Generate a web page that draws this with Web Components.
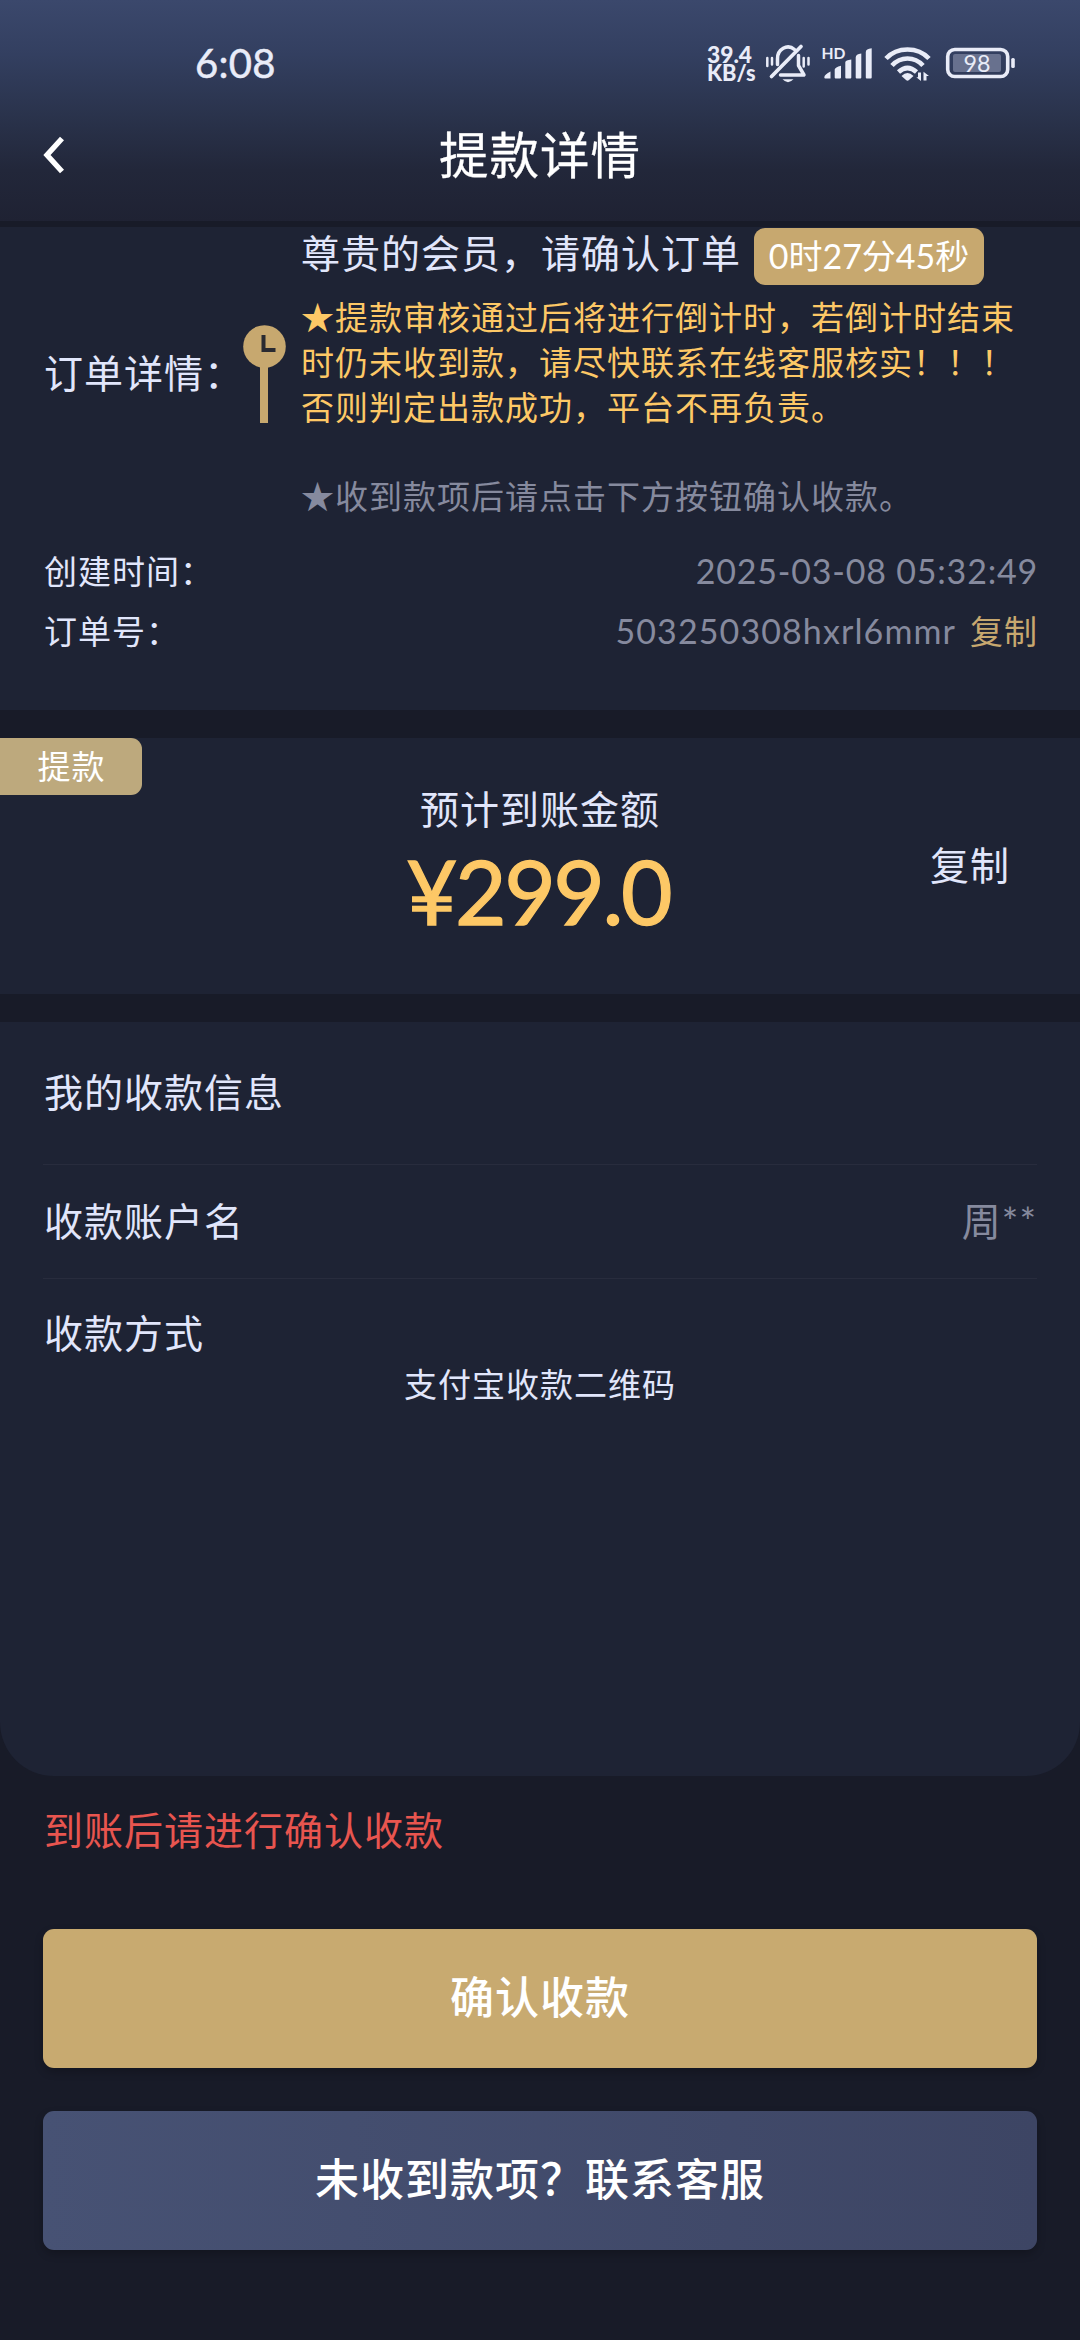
<!DOCTYPE html>
<html lang="zh-CN">
<head>
<meta charset="utf-8">
<title>提款详情</title>
<style>
  html, body { margin: 0; background: #181b28; }
  body {
    width: 1080px; height: 2340px; overflow: hidden;
    font-family: Lato, "Noto Sans CJK SC", sans-serif;
    color: #e1e6fb;
    --panel: #1e2334; --gold: #c7a86f; --amber: #fdc866; --muted: #868a9e;
  }
</style>
</head>
<body>
<withdraw-page></withdraw-page>
<script>
const define = (name, html) => customElements.define(name, class extends HTMLElement {
  constructor() {
    super();
    this.attachShadow({ mode: 'open' }).innerHTML = html;
  }
});

define('status-bar', `
<style>
  :host { display: flex; height: 125px; box-sizing: border-box; padding: 0 65px 0 195px; justify-content: space-between; align-items: center; color: #e9ecf8; }
  .time { font-size: 40px; line-height: 50px; letter-spacing: .3px; font-weight: 400; -webkit-text-stroke: .5px; }
  .icons { display: flex; height: 48px; }
  svg { display: block; }
  text { font-family: Lato, sans-serif; }
</style>
<span class="time">6:08</span>
<div class="icons">
  <svg width="180" height="48" viewBox="0 0 180 48" fill="#e9ecf8">
    <g font-weight="900" font-size="22">
      <text x="7" y="24" textLength="45" lengthAdjust="spacingAndGlyphs">39.4</text>
      <text x="7" y="42" textLength="48.500" lengthAdjust="spacingAndGlyphs">KB/s</text>
    </g>
    <g fill="none" stroke="#e9ecf8" stroke-linecap="round" stroke-linejoin="round">
      <path d="M77.500 25.500V20a10.500 11.500 0 0 1 17-9.500M98.500 16.500v10l5.500 9.500H80.500" stroke-width="3.500"/>
      <path d="M71.500 37.500L101 7.500" stroke-width="3.700"/>
      <path d="M67.300 19v8M72 19v6.500M103.700 19v8.500M108.500 19v6.500" stroke-width="2.500"/>
    </g>
    <path d="M82.500 40.300H93.500Q88 46 82.500 40.300Z"/>
    <text x="121.500" y="20" font-size="15.600" font-weight="700" textLength="24" lengthAdjust="spacingAndGlyphs">HD</text>
    <path d="M124.300 38.200Q124.500 35.500 130.500 32.500V39.500H125.300Q124.300 39.500 124.300 38.200ZM134.700 30.500Q135 28.500 141 26.800V38.500Q141 39.500 140 39.500H135.700Q134.700 39.500 134.700 38.500ZM145.300 23.200Q145.500 21.200 151.300 20.500V38.500Q151.300 39.500 150.300 39.500H146.300Q145.300 39.500 145.300 38.500ZM155.700 18.500Q155.700 15.200 161.300 14.500V38.500Q161.300 39.500 160.300 39.500H156.700Q155.700 39.500 155.700 38.500ZM165.800 13Q165.800 10 171.700 9.300V38.500Q171.700 39.500 170.700 39.500H166.800Q165.800 39.500 165.800 38.500Z"/>
  </svg>
  <svg width="135" height="48" viewBox="0 0 135 48" style="margin-left:-5px" fill="#e9ecf8">
    <g fill="none" stroke="#e9ecf8" stroke-width="4.700">
      <path d="M11 19.500Q19.500 10.500 32.500 10.500T54 19.500"/>
      <path d="M17 26.500Q23.500 19.500 32.500 19.500T48 26.500"/>
      <path d="M23.500 33Q32.500 25 41.500 33"/>
    </g>
    <path d="M26.500 37Q32.500 31 38.500 37L34 41Q32.500 42.300 31 41Z"/>
    <path d="M43 33.500H46V42L41.300 38.300H43ZM48.500 41.500V32.800L54 37H51.500V41.500Z"/>
    <rect x="72.700" y="10.500" width="60" height="27" rx="7" fill="none" stroke="#e9ecf8" stroke-width="3.600"/>
    <rect x="78" y="15" width="48" height="18" rx="2" fill="#68718e"/>
    <text x="102" y="32.800" font-size="24" text-anchor="middle" textLength="27" lengthAdjust="spacingAndGlyphs">98</text>
  </svg>
  <svg width="5" height="48" viewBox="0 0 5 48"><rect x="1.200" y="19" width="3.600" height="10" rx="1.500" fill="#e9ecf8"/></svg>
</div>`);

define('nav-bar', `
<style>
  :host { display: grid; grid-template-columns: 120px 1fr 120px; align-items: center; height: 60px; color: #fff; }
  svg { margin-left: 42px; display: block; }
  h1 { margin: 0; font-size: 49.500px; letter-spacing: 1px; line-height: 60px; font-weight: 400; text-align: center; -webkit-text-stroke: .3px; }
</style>
<svg width="24" height="40" viewBox="0 0 24 40"><path d="M20 3.500L5 20L20 36.500" fill="none" stroke="#fff" stroke-width="5.400"/></svg>
<h1><slot></slot></h1>`);

define('page-header', `
<style>
  :host { display: block; height: 221px; background: linear-gradient(#3b486c 0, #333f60 55px, #2a334c 115px, #22273a 170px, #1f2233 221px); }
</style>
<status-bar></status-bar><nav-bar><slot></slot></nav-bar>`);

define('clock-pin', `
<style>:host { display: block; width: 43px; height: 98px; } svg { display: block; }</style>
<svg width="43" height="98" viewBox="0 0 43 98">
  <rect x="17" y="40" width="8" height="58" fill="#c7a86f"/>
  <circle cx="21.500" cy="21.500" r="21.300" fill="#c7a86f"/>
  <path d="M20.500 10V25H32.500" fill="none" stroke="#292a31" stroke-width="4"/>
</svg>`);

define('gold-badge', `
<style>
  :host { display: block; box-sizing: border-box; height: 57px; line-height: 56px; border-radius: 11px; background: var(--gold); color: #fff; font-size: 34px; text-align: center; white-space: nowrap; }
</style><slot></slot>`);

define('meta-row', `
<style>
  :host { display: flex; justify-content: space-between; height: 60px; line-height: 60px; font-size: 33px; letter-spacing: 1px; white-space: nowrap; }
  .value { display: flex; gap: 14px; color: var(--muted); margin-right: -1px; }
  ::slotted(b) { font-weight: 400; color: var(--gold); }
</style>
<span><slot name="label"></slot></span><div class="value"><slot></slot></div>`);

define('order-card', `
<style>
  :host { display: block; box-sizing: border-box; height: 483px; padding: 1px 43px 0 44px; background: var(--panel); }
  .detail { display: flex; align-items: center; height: 292px; white-space: nowrap; }
  .label { width: 199px; font-size: 39px; letter-spacing: 1px; line-height: 50px; padding-bottom: 3px; }
  .body { margin-left: 15px; height: 292px; }
  .title { display: flex; height: 57px; }
  .title span { font-size: 39px; letter-spacing: 1px; line-height: 51px; width: 453px; }
  gold-badge { width: 230px; }
  p { margin: 0; font-size: 33px; letter-spacing: 1px; line-height: 45px; color: var(--amber); }
  .warn { margin-top: 10px; }
  .tip { margin-top: 44px; color: var(--muted); }
  .meta { margin-top: 21px; }
  .date { font-size: 34px; letter-spacing: .8px; }
  .num { font-size: 34px; letter-spacing: 1.100px; }
</style>
<div class="detail">
  <div class="label">订单详情：</div>
  <clock-pin></clock-pin>
  <div class="body">
    <div class="title"><span>尊贵的会员，请确认订单</span><gold-badge>0时27分45秒</gold-badge></div>
    <p class="warn">★提款审核通过后将进行倒计时，若倒计时结束<br>时仍未收到款，请尽快联系在线客服核实！！！<br>否则判定出款成功，平台不再负责。</p>
    <p class="tip">★收到款项后请点击下方按钮确认收款。</p>
  </div>
</div>
<div class="meta">
  <meta-row><span slot="label">创建时间：</span><span class="date">2025-03-08 05:32:49</span></meta-row>
  <meta-row><span slot="label">订单号：</span><span class="num">503250308hxrl6mmr</span><b>复制</b></meta-row>
</div>`);

define('amount-card', `
<style>
  :host { display: grid; grid-template-columns: 260px 1fr 260px; height: 256px; background: var(--panel); }
  gold-badge { width: 142px; border-radius: 0 11px 11px 0; background: #bda97d; font-size: 33px; letter-spacing: 1px; padding-left: 1px; }
  .mid { text-align: center; padding-top: 46px; }
  .cap { font-size: 39px; letter-spacing: 1px; line-height: 50px; }
  .sum { font-size: 89px; line-height: 110px; margin: 2px 4px 0 0; color: var(--amber); letter-spacing: -2.500px; -webkit-text-stroke: 1.300px; }
  .copy { font-size: 39px; letter-spacing: 1px; line-height: 50px; padding: 102px 0 0 110px; }
</style>
<gold-badge>提款</gold-badge>
<div class="mid"><div class="cap">预计到账金额</div><div class="sum">¥299.0</div></div>
<div class="copy">复制</div>`);

define('info-row', `
<style>
  :host { display: flex; justify-content: space-between; align-items: center; box-sizing: border-box; font-size: 39px; letter-spacing: 1px; line-height: 50px; border-bottom: 1px solid #282c3d; }
  .value { color: var(--muted); }
</style>
<span><slot></slot></span><span class="value"><slot name="value"></slot></span>`);

define('payee-card', `
<style>
  :host { display: block; box-sizing: border-box; height: 754px; padding: 0 43px; background: var(--panel); border-radius: 0 0 54px 54px; }
  info-row { height: 114px; padding: 0 0 2px 1px; }
  info-row.head { height: 143px; }
  info-row.last { height: 56px; margin-top: 27px; border: 0; }
  .qr { text-align: center; font-size: 33px; letter-spacing: 1px; line-height: 44px; }
</style>
<info-row class="head">我的收款信息</info-row>
<info-row>收款账户名<span slot="value">周**</span></info-row>
<info-row class="last">收款方式</info-row>
<div class="qr">支付宝收款二维码</div>`);

define('action-button', `
<style>
  :host { display: block; height: 139px; line-height: 137px; border-radius: 11px; text-align: center; color: #fff; font-size: 44px; letter-spacing: 1px; font-weight: 500; background: #c8aa70; box-shadow: 0 4px 8px rgba(0,0,0,.22); }
  :host([kind="support"]) { background: linear-gradient(90deg, #475274, #3d4564); }
</style><slot></slot>`);

define('page-actions', `
<style>
  :host { display: flex; flex-direction: column; gap: 43px; padding: 0 43px; }
  .note { font-size: 39px; letter-spacing: 1px; line-height: 50px; color: #e8554f; padding-left: 1px; margin: 29px 0 31px; }
</style>
<div class="note">到账后请进行确认收款</div>
<action-button>确认收款</action-button>
<action-button kind="support">未收到款项？联系客服</action-button>`);

define('withdraw-page', `
<style>
  :host { display: flex; flex-direction: column; width: 1080px; height: 2340px; background: #181b28; }
  order-card { margin-top: 6px; }
  amount-card, payee-card { margin-top: 28px; }
</style>
<page-header>提款详情</page-header>
<order-card></order-card>
<amount-card></amount-card>
<payee-card></payee-card>
<page-actions></page-actions>`);
</script>
</body>
</html>
